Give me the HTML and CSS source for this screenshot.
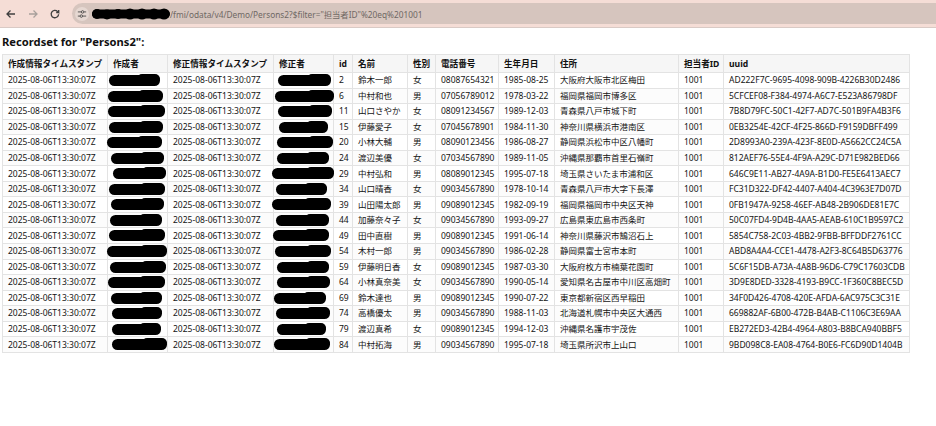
FILE: index.html
```html
<!DOCTYPE html>
<html lang="ja">
<head>
<meta charset="utf-8">
<title>Recordset</title>
<link rel="stylesheet" href="styles.css">
</head>
<body>
<header class="bar">
  <svg class="nav" viewBox="0 0 14 14"><path d="M11 7H3M6.5 3.5 3 7l3.5 3.5" class="ic"/></svg>
  <svg class="nav" viewBox="0 0 14 14"><path d="M3 7h8M7.5 3.5 11 7l-3.5 3.5" class="ic dim"/></svg>
  <svg class="nav" viewBox="0 0 14 14"><path d="M10.6 7.2a3.7 3.7 0 1 1-1.1-2.8l1.2 1.1V2.9M10.7 5.5H8.2" class="ic"/></svg>
  <div class="url">
    <span class="tune"><svg viewBox="0 0 12 12" width="10" height="10"><path d="M1 3.5h4M8.5 3.5H11M1 8.5h2.5M7 8.5h4" class="ic thin"/><circle cx="6.7" cy="3.5" r="1.5" class="ic thin"/><circle cx="5.2" cy="8.5" r="1.5" class="ic thin"/></svg></span>
    <svg class="host" viewBox="0 0 78 12" width="78" height="12"><rect x="0" y="1.5" width="78" height="9" rx="4.5"/><circle cx="5" cy="6" r="5"/><circle cx="15" cy="6.5" r="5"/><circle cx="26" cy="6" r="5"/><circle cx="38" cy="6" r="5.5"/><circle cx="50" cy="6" r="5.5"/><circle cx="62" cy="6" r="5.5"/><circle cx="72" cy="6" r="5.5"/></svg>
    <span class="path">/fmi/odata/v4/Demo/Persons2?$filter="担当者ID"%20eq%201001</span>
  </div>
</header>
<h1 class="title">Recordset for "Persons2":</h1>
<table class="grid">
  <thead>
    <tr><th>作成情報タイムスタンプ</th><th>作成者</th><th>修正情報タイムスタンプ</th><th>修正者</th><th>id</th><th>名前</th><th>性別</th><th>電話番号</th><th>生年月日</th><th>住所</th><th>担当者ID</th><th>uuid</th></tr>
  </thead>
  <tbody>
    <tr><td>2025-08-06T13:30:07Z</td><td class="ink"><i class="blot" style="left:1px;width:51px"></i></td><td>2025-08-06T13:30:07Z</td><td class="ink"><i class="blot" style="left:4px;width:53px"></i></td><td>2</td><td>鈴木一郎</td><td>女</td><td>08087654321</td><td>1985-08-25</td><td>大阪府大阪市北区梅田</td><td>1001</td><td>AD222F7C-9695-4098-909B-4226B30D2486</td></tr>
    <tr><td>2025-08-06T13:30:07Z</td><td class="ink"><i class="blot" style="left:0px;width:55px"></i></td><td>2025-08-06T13:30:07Z</td><td class="ink"><i class="blot" style="left:1px;width:59px"></i></td><td>6</td><td>中村和也</td><td>男</td><td>07056789012</td><td>1978-03-22</td><td>福岡県福岡市博多区</td><td>1001</td><td>5CFCEF08-F384-4974-A6C7-E523A86798DF</td></tr>
    <tr><td>2025-08-06T13:30:07Z</td><td class="ink"><i class="blot" style="left:0px;width:57px"></i></td><td>2025-08-06T13:30:07Z</td><td class="ink"><i class="blot" style="left:4px;width:54px"></i></td><td>11</td><td>山口さやか</td><td>女</td><td>08091234567</td><td>1989-12-03</td><td>青森県八戸市城下町</td><td>1001</td><td>7B8D79FC-50C1-42F7-AD7C-501B9FA4B3F6</td></tr>
    <tr><td>2025-08-06T13:30:07Z</td><td class="ink"><i class="blot" style="left:1px;width:54px"></i></td><td>2025-08-06T13:30:07Z</td><td class="ink"><i class="blot" style="left:5px;width:49px"></i></td><td>15</td><td>伊藤愛子</td><td>女</td><td>07045678901</td><td>1984-11-30</td><td>神奈川県横浜市港南区</td><td>1001</td><td>0EB3254E-42CF-4F25-866D-F9159DBFF499</td></tr>
    <tr><td>2025-08-06T13:30:07Z</td><td class="ink"><i class="blot" style="left:-1px;width:55px"></i></td><td>2025-08-06T13:30:07Z</td><td class="ink"><i class="blot" style="left:3px;width:56px"></i></td><td>20</td><td>小林大輔</td><td>男</td><td>08090123456</td><td>1986-08-27</td><td>静岡県浜松市中区八幡町</td><td>1001</td><td>2D8993A0-239A-423F-8E0D-A5662CC24C5A</td></tr>
    <tr><td>2025-08-06T13:30:07Z</td><td class="ink"><i class="blot" style="left:3px;width:53px"></i></td><td>2025-08-06T13:30:07Z</td><td class="ink"><i class="blot" style="left:3px;width:52px"></i></td><td>24</td><td>渡辺美優</td><td>女</td><td>07034567890</td><td>1989-11-05</td><td>沖縄県那覇市首里石嶺町</td><td>1001</td><td>812AEF76-55E4-4F9A-A29C-D71E982BED66</td></tr>
    <tr><td>2025-08-06T13:30:07Z</td><td class="ink"><i class="blot" style="left:5px;width:53px"></i></td><td>2025-08-06T13:30:07Z</td><td class="ink"><i class="blot" style="left:-2px;width:62px"></i></td><td>29</td><td>中村弘和</td><td>男</td><td>08089012345</td><td>1995-07-18</td><td>埼玉県さいたま市浦和区</td><td>1001</td><td>646C9E11-AB27-4A9A-B1D0-FE5E6413AEC7</td></tr>
    <tr><td>2025-08-06T13:30:07Z</td><td class="ink"><i class="blot" style="left:1px;width:56px"></i></td><td>2025-08-06T13:30:07Z</td><td class="ink"><i class="blot" style="left:2px;width:51px"></i></td><td>34</td><td>山口晴香</td><td>女</td><td>09034567890</td><td>1978-10-14</td><td>青森県八戸市大字下長澤</td><td>1001</td><td>FC31D322-DF42-4407-A404-4C3963E7D07D</td></tr>
    <tr><td>2025-08-06T13:30:07Z</td><td class="ink"><i class="blot" style="left:3px;width:53px"></i></td><td>2025-08-06T13:30:07Z</td><td class="ink"><i class="blot" style="left:-2px;width:59px"></i></td><td>39</td><td>山田陽太郎</td><td>男</td><td>09089012345</td><td>1982-09-19</td><td>福岡県福岡市中央区天神</td><td>1001</td><td>0FB1947A-9258-46EF-AB48-2B906DE81E7C</td></tr>
    <tr><td>2025-08-06T13:30:07Z</td><td class="ink"><i class="blot" style="left:2px;width:52px"></i></td><td>2025-08-06T13:30:07Z</td><td class="ink"><i class="blot" style="left:2px;width:53px"></i></td><td>44</td><td>加藤奈々子</td><td>女</td><td>09034567890</td><td>1993-09-27</td><td>広島県東広島市西条町</td><td>1001</td><td>50C07FD4-9D4B-4AA5-AEAB-610C1B9597C2</td></tr>
    <tr><td>2025-08-06T13:30:07Z</td><td class="ink"><i class="blot" style="left:1px;width:56px"></i></td><td>2025-08-06T13:30:07Z</td><td class="ink"><i class="blot" style="left:-1px;width:56px"></i></td><td>49</td><td>田中直樹</td><td>男</td><td>09089012345</td><td>1991-06-14</td><td>神奈川県藤沢市鵠沼石上</td><td>1001</td><td>5854C758-2C03-4BB2-9FBB-BFFDDF2761CC</td></tr>
    <tr><td>2025-08-06T13:30:07Z</td><td class="ink"><i class="blot" style="left:-1px;width:60px"></i></td><td>2025-08-06T13:30:07Z</td><td class="ink"><i class="blot" style="left:1px;width:56px"></i></td><td>54</td><td>木村一郎</td><td>男</td><td>09034567890</td><td>1986-02-28</td><td>静岡県富士宮市本町</td><td>1001</td><td>ABD8A4A4-CCE1-4478-A2F3-8C64B5D63776</td></tr>
    <tr><td>2025-08-06T13:30:07Z</td><td class="ink"><i class="blot" style="left:2px;width:56px"></i></td><td>2025-08-06T13:30:07Z</td><td class="ink"><i class="blot" style="left:3px;width:52px"></i></td><td>59</td><td>伊藤明日香</td><td>女</td><td>09089012345</td><td>1987-03-30</td><td>大阪府枚方市楠葉花園町</td><td>1001</td><td>5C6F15DB-A73A-4A8B-96D6-C79C17603CDB</td></tr>
    <tr><td>2025-08-06T13:30:07Z</td><td class="ink"><i class="blot" style="left:0px;width:57px"></i></td><td>2025-08-06T13:30:07Z</td><td class="ink"><i class="blot" style="left:3px;width:53px"></i></td><td>64</td><td>小林真奈美</td><td>女</td><td>09034567890</td><td>1990-05-14</td><td>愛知県名古屋市中川区高畑町</td><td>1001</td><td>3D9E8DED-3328-4193-B9CC-1F360C8BEC5D</td></tr>
    <tr><td>2025-08-06T13:30:07Z</td><td class="ink"><i class="blot" style="left:3px;width:51px"></i></td><td>2025-08-06T13:30:07Z</td><td class="ink"><i class="blot" style="left:0px;width:52px"></i></td><td>69</td><td>鈴木達也</td><td>男</td><td>09089012345</td><td>1990-07-22</td><td>東京都新宿区西早稲田</td><td>1001</td><td>34F0D426-4708-420E-AFDA-6AC975C3C31E</td></tr>
    <tr><td>2025-08-06T13:30:07Z</td><td class="ink"><i class="blot" style="left:4px;width:50px"></i></td><td>2025-08-06T13:30:07Z</td><td class="ink"><i class="blot" style="left:2px;width:54px"></i></td><td>74</td><td>高橋優太</td><td>男</td><td>09034567890</td><td>1988-11-03</td><td>北海道札幌市中央区大通西</td><td>1001</td><td>669882AF-6B00-472B-B4AB-C1106C3E69AA</td></tr>
    <tr><td>2025-08-06T13:30:07Z</td><td class="ink"><i class="blot" style="left:4px;width:49px"></i></td><td>2025-08-06T13:30:07Z</td><td class="ink"><i class="blot" style="left:3px;width:49px"></i></td><td>79</td><td>渡辺真希</td><td>女</td><td>09089012345</td><td>1994-12-03</td><td>沖縄県名護市宇茂佐</td><td>1001</td><td>EB272ED3-42B4-4964-A803-B8BCA940BBF5</td></tr>
    <tr><td>2025-08-06T13:30:07Z</td><td class="ink"><i class="blot" style="left:4px;width:55px"></i></td><td>2025-08-06T13:30:07Z</td><td class="ink"><i class="blot" style="left:0px;width:56px"></i></td><td>84</td><td>中村拓海</td><td>男</td><td>09034567890</td><td>1995-07-18</td><td>埼玉県所沢市上山口</td><td>1001</td><td>9BD098C8-EA08-4764-B0E6-FC6D90D1404B</td></tr>
  </tbody>
</table>
</body>
</html>
```
FILE: styles.css
```css
* { box-sizing: border-box; }
html, body { margin: 0; padding: 0; }
body { background: #fff; color: #141414; font-family: "Noto Sans", "Noto Sans CJK JP", sans-serif; overflow: hidden; }
.bar { height: 28px; background: #f5ddd6; border-bottom: 1px solid #d9cac5; display: flex; align-items: center; padding-left: 4px; gap: 8px; }
.nav { width: 14px; height: 14px; flex: none; }
.ic { fill: none; stroke: #3f3f3f; stroke-width: 1.3; }
.ic.dim { stroke: #a8a09c; }
.ic.thin { stroke-width: 1; }
.url { flex: 1; height: 21px; margin-left: 2px; background: #d6c5be; border-radius: 10.5px 0 0 10.5px; display: flex; align-items: center; font-size: 8.3px; color: #6f6864; padding-left: 3px; }
.tune { width: 14px; height: 14px; border-radius: 50%; background: #e6d8d2; display: flex; align-items: center; justify-content: center; }
.host { margin-left: 3px; flex: none; fill: #000; }
.title { margin: 5px 0 0 2px; font-size: 11.2px; line-height: 17px; font-weight: 700; color: #111; }
.grid { margin: 4px 0 0 2px; width: 908px; border-collapse: collapse; table-layout: fixed; font-size: 8.5px; line-height: 12px; border: 1px solid #e0e0e0; }
th, td { border: 1px solid #e3e3e3; padding: 0 5px; white-space: nowrap; overflow: hidden; text-align: left; height: 15.56px; }
th { background: #f6f6f6; font-size: 8.6px; font-weight: 700; height: 18px; color: #111; }
tbody tr:nth-child(even) td { background: #fcfcfc; }
th:nth-child(1) { width: 105px; }
th:nth-child(2) { width: 60px; }
th:nth-child(3) { width: 106px; }
th:nth-child(4) { width: 60px; }
th:nth-child(5) { width: 19px; }
th:nth-child(6) { width: 55px; }
th:nth-child(7) { width: 28px; }
th:nth-child(8) { width: 63px; }
th:nth-child(9) { width: 56px; }
th:nth-child(10) { width: 124px; }
th:nth-child(11) { width: 45px; }
td.ink { position: relative; overflow: visible; }
.blot { position: absolute; top: 2px; height: 11px; background: #000; border-radius: 6px; }
.blot::after { content: ""; position: absolute; right: 0; top: -1px; width: 45%; height: 10px; background: #000; border-radius: 5px; }
```
